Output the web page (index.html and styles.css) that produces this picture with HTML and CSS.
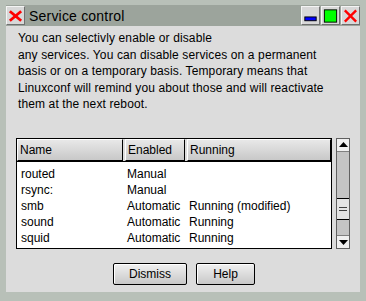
FILE: index.html
```html
<!DOCTYPE html>
<html lang="en">
  <head>
    <meta charset="UTF-8" />
    <title>Service control</title>
    <link rel="stylesheet" href="styles.css">
  </head>
  <body>
    <div class="window">
      <div class="titlebar">
        <div class="tb-btn menu-btn">
          <svg width="18" height="18" viewBox="0 0 18 18"><path d="M3 4 L15 14 M15 4 L3 14" stroke="#f00" stroke-width="3"/></svg>
        </div>
        <div class="title">Service control</div>
        <div class="tb-btn">
          <svg width="18" height="18" viewBox="0 0 18 18"><rect x="3" y="10" width="12" height="4" fill="#00f" stroke="#000" stroke-width="1"/></svg>
        </div>
        <div class="tb-btn">
          <svg width="18" height="18" viewBox="0 0 18 18"><rect x="2.5" y="2.5" width="13" height="13" fill="#0f0" stroke="#000" stroke-width="1"/></svg>
        </div>
        <div class="tb-btn">
          <svg width="18" height="18" viewBox="0 0 18 18"><path d="M3 3 L15 15 M15 3 L3 15" stroke="#f00" stroke-width="2.5"/></svg>
        </div>
      </div>

      <div class="content">
        <p class="intro">You can selectivly enable or disable<br>any services. You can disable services on a permanent<br>basis or on a temporary basis. Temporary means that<br>Linuxconf will remind you about those and will reactivate<br>them at the next reboot.</p>

        <div class="list-area">
          <div class="list">
            <div class="list-head">
              <div class="col-name">Name</div>
              <div class="col-enabled">Enabled</div>
              <div class="col-running">Running</div>
            </div>
            <div class="list-body">
              <div class="row"><span class="col-name">routed</span><span class="col-enabled">Manual</span><span class="col-running"></span></div>
              <div class="row"><span class="col-name">rsync:</span><span class="col-enabled">Manual</span><span class="col-running"></span></div>
              <div class="row"><span class="col-name">smb</span><span class="col-enabled">Automatic</span><span class="col-running">Running (modified)</span></div>
              <div class="row"><span class="col-name">sound</span><span class="col-enabled">Automatic</span><span class="col-running">Running</span></div>
              <div class="row"><span class="col-name">squid</span><span class="col-enabled">Automatic</span><span class="col-running">Running</span></div>
            </div>
          </div>
          <div class="scrollbar">
            <div class="arrow">
              <svg width="9" height="6" viewBox="0 0 9 6"><path d="M4.5 0 L9 5 L0 5 Z" fill="#000"/></svg>
            </div>
            <div class="trough">
              <div class="thumb"><span></span><span></span></div>
            </div>
            <div class="arrow">
              <svg width="9" height="6" viewBox="0 0 9 6"><path d="M0 1 L9 1 L4.5 6 Z" fill="#000"/></svg>
            </div>
          </div>
        </div>

        <div class="buttons">
          <button class="btn btn-dismiss">Dismiss</button>
          <button class="btn btn-help">Help</button>
        </div>
      </div>
    </div>
  </body>
</html>
```

FILE: styles.css
```css
body {
  margin: 0;
  font-family: "Liberation Sans", Arial, sans-serif;
  font-size: 12px;
  color: #000;
}

.window {
  width: 366px;
  height: 301px;
  box-sizing: border-box;
  background: #b8c0b8;
  padding: 5px 6px 9px 6px;
  display: flex;
  flex-direction: column;
}

.titlebar {
  height: 21px;
  background: #9ca49c;
  display: flex;
  align-items: center;
}

.tb-btn {
  width: 19px;
  height: 19px;
  box-sizing: border-box;
  background: #d8d8d8;
  border: 1px solid;
  border-color: #f4f4f4 #707070 #707070 #f4f4f4;
  display: flex;
  align-items: center;
  justify-content: center;
  margin-left: 1px;
}

.menu-btn {
  margin-left: 0;
}

.title {
  flex: 1;
  font-size: 14px;
  padding-left: 4px;
  letter-spacing: 0.2px;
}

.content {
  flex: 1;
  background: #dcdcdc;
  padding: 4px 10px 0 12px;
}

.intro {
  margin: 0;
  line-height: 16.5px;
  letter-spacing: 0.12px;
}

.list-area {
  display: flex;
  margin-top: 25px;
  height: 111px;
}

.list {
  width: 316px;
  box-sizing: border-box;
  border: 1px solid #000;
  background: #fff;
  margin-left: -2px;
}

.list-head {
  display: flex;
  height: 22px;
  background: #dcdcdc;
  border-bottom: 1px solid #000;
}

.list-head div {
  box-sizing: border-box;
  border: 1px solid;
  border-color: #fff #000 #000 #fff;
  background: linear-gradient(#e8e8e8, #c8c8c8);
  padding: 3px 0 0 2px;
  margin-right: 2px;
}

.list-head .col-name { width: 106px; }
.list-head .col-enabled { width: 60px; }
.list-head .col-running { flex: 1; margin-right: 0; }

.list-body {
  padding-top: 4px;
}

.row {
  display: flex;
  height: 16px;
  line-height: 16px;
}

.row .col-name { width: 108px; padding-left: 4px; box-sizing: border-box; }
.row .col-enabled { width: 62px; padding-left: 2px; box-sizing: border-box; }
.row .col-running { padding-left: 2px; }

.scrollbar {
  width: 14px;
  margin-left: 4px;
  box-sizing: border-box;
  border: 1px solid #606060;
  background: #c4c4c4;
  display: flex;
  flex-direction: column;
}

.arrow {
  height: 12px;
  background: #f0f0f0;
  border-bottom: 1px solid #808080;
  display: flex;
  align-items: center;
  justify-content: center;
}

.arrow:last-child {
  border-bottom: none;
  border-top: 1px solid #808080;
}

.trough {
  flex: 1;
  position: relative;
}

.thumb {
  position: absolute;
  left: 0;
  right: 0;
  top: 46px;
  height: 22px;
  box-sizing: border-box;
  background: #e4e4e4;
  border-top: 1px solid #000;
  border-bottom: 1px solid #000;
  display: flex;
  flex-direction: column;
  justify-content: center;
  align-items: center;
  gap: 2px;
}

.thumb span {
  display: block;
  width: 8px;
  height: 1px;
  background: #404040;
}

.buttons {
  display: flex;
  justify-content: center;
  gap: 9px;
  margin-top: 14px;
}

.btn {
  font-family: "Liberation Sans", Arial, sans-serif;
  font-size: 12px;
  height: 22px;
  box-sizing: border-box;
  border: 1px solid #000;
  border-radius: 2px;
  background: linear-gradient(#f0f0f0, #c8c8c8);
  box-shadow: inset 1px 1px 0 #fff;
  padding: 0;
  color: #000;
}

.btn-dismiss { width: 74px; }
.btn-help { width: 59px; }
```
